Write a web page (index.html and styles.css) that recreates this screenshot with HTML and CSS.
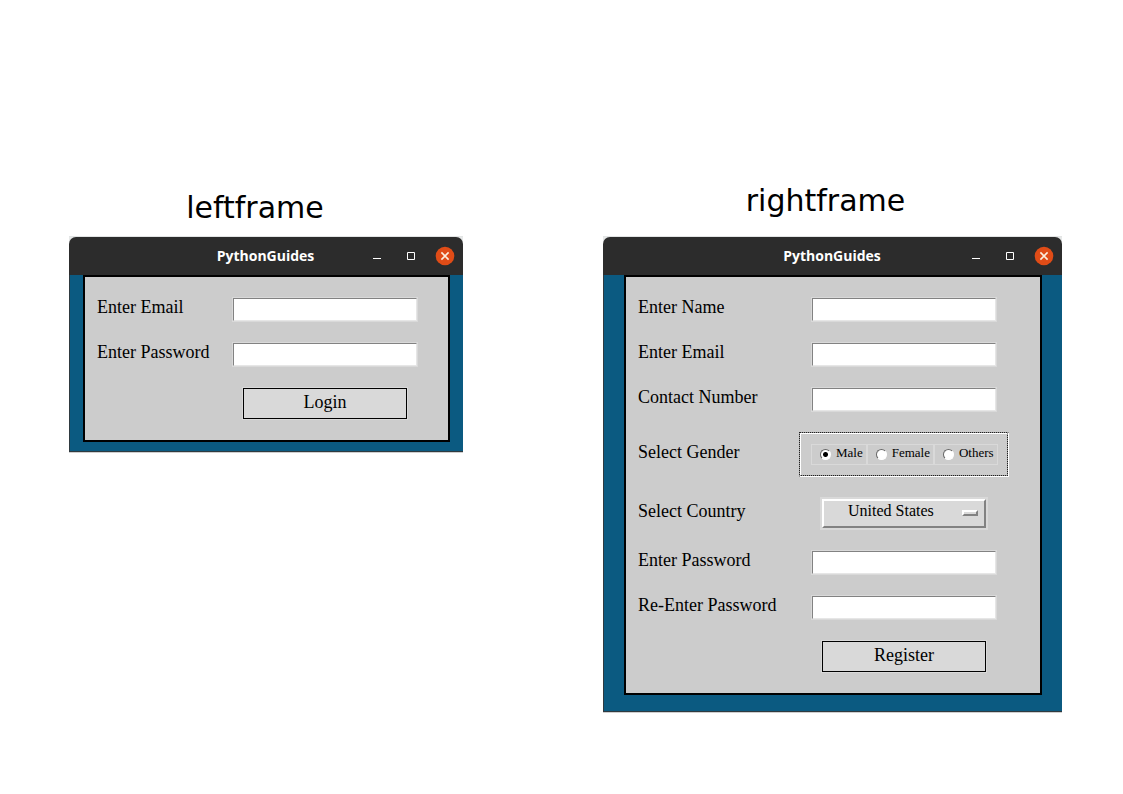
FILE: index.html
```html
<!DOCTYPE html>
<html lang="en">
<head>
<meta charset="utf-8">
<meta name="viewport" content="width=device-width, initial-scale=1">
<title>PythonGuides</title>
<link rel="stylesheet" href="styles.css">
</head>
<body>
<main class="board">
  <section class="panel panel-left">
    <h1 class="caption">leftframe</h1>
    <div class="window">
      <header class="titlebar">
        <h2 class="title">PythonGuides</h2>
        <div class="controls">
          <button class="control" type="button" aria-label="Minimize"><svg width="20" height="20" viewBox="0 0 20 20"><path d="M6 12.5h8" stroke="#fff" fill="none"/></svg></button>
          <button class="control" type="button" aria-label="Maximize"><svg width="20" height="20" viewBox="0 0 20 20"><path d="M6.5 6.5h7v7h-7z" stroke="#fff" fill="none"/></svg></button>
          <button class="control" type="button" aria-label="Close"><svg width="20" height="20" viewBox="0 0 20 20"><circle cx="10" cy="10" r="9.3" fill="#e04c17"/><path d="M6.4 6.4l7.2 7.2M13.6 6.4l-7.2 7.2" stroke="#fbeedd" stroke-width="1.6" fill="none"/></svg></button>
        </div>
      </header>
      <div class="body">
        <form class="form">
          <label class="label" for="login-email">Enter Email</label>
          <input class="entry" id="login-email" type="email">
          <label class="label" for="login-password">Enter Password</label>
          <input class="entry" id="login-password" type="password">
          <button class="submit" type="button">Login</button>
        </form>
      </div>
    </div>
  </section>

  <section class="panel panel-right">
    <h1 class="caption">rightframe</h1>
    <div class="window">
      <header class="titlebar">
        <h2 class="title">PythonGuides</h2>
        <div class="controls">
          <button class="control" type="button" aria-label="Minimize"><svg width="20" height="20" viewBox="0 0 20 20"><path d="M6 12.5h8" stroke="#fff" fill="none"/></svg></button>
          <button class="control" type="button" aria-label="Maximize"><svg width="20" height="20" viewBox="0 0 20 20"><path d="M6.5 6.5h7v7h-7z" stroke="#fff" fill="none"/></svg></button>
          <button class="control" type="button" aria-label="Close"><svg width="20" height="20" viewBox="0 0 20 20"><circle cx="10" cy="10" r="9.3" fill="#e04c17"/><path d="M6.4 6.4l7.2 7.2M13.6 6.4l-7.2 7.2" stroke="#fbeedd" stroke-width="1.6" fill="none"/></svg></button>
        </div>
      </header>
      <div class="body">
        <form class="form">
          <label class="label" for="name">Enter Name</label>
          <input class="entry" id="name" type="text">
          <label class="label" for="email">Enter Email</label>
          <input class="entry" id="email" type="email">
          <label class="label" for="contact">Contact Number</label>
          <input class="entry" id="contact" type="tel">
          <span class="label" id="gender-label">Select Gender</span>
          <div class="group" role="radiogroup" aria-labelledby="gender-label">
            <div class="group-inner">
              <label class="option"><input class="radio" type="radio" name="gender" checked><span class="option-text">Male</span></label>
              <label class="option"><input class="radio" type="radio" name="gender"><span class="option-text">Female</span></label>
              <label class="option"><input class="radio" type="radio" name="gender"><span class="option-text">Others</span></label>
            </div>
          </div>
          <label class="label" for="country">Select Country</label>
          <div class="menu">
            <select class="select" id="country"><option>United States</option></select>
            <span class="indicator"></span>
          </div>
          <label class="label" for="password">Enter Password</label>
          <input class="entry" id="password" type="password">
          <label class="label" for="password-again">Re-Enter Password</label>
          <input class="entry" id="password-again" type="password">
          <button class="submit" type="button">Register</button>
        </form>
      </div>
    </div>
  </section>
</main>
</body>
</html>
```

FILE: styles.css
```css
* {
  box-sizing: border-box;
}

body {
  margin: 0;
  background: #fff;
  color: #000;
  font-family: "Liberation Serif", "Times New Roman", serif;
}

.board {
  display: flex;
  flex-wrap: wrap;
  justify-content: space-between;
  align-items: flex-start;
  gap: 40px;
  padding: 183px 61px 40px 69px;
}

.panel-left {
  flex: 0 1 394px;
}

.panel-right {
  flex: 0 1 459px;
}

.caption {
  margin: 0 0 18px;
  padding-right: 14px;
  font: 400 30px/36px "DejaVu Sans", sans-serif;
  text-align: center;
}

.panel-left .caption {
  margin: 7px 0 11px;
  padding-right: 22px;
}

.window {
  background: #e6e8e8;
  box-shadow: 0 1px 0 #cfcfcf, 0 -1px 0 #e2e4e4;
}

.titlebar {
  display: grid;
  grid-template-columns: 1fr auto 1fr;
  align-items: center;
  height: 38px;
  padding-right: 1px;
  border-radius: 7px 7px 0 0;
  background: #2c2c2c;
}

.title {
  grid-column: 2;
  margin: 0;
  color: #fff;
  font: 700 14px/20px "Open Sans", "Noto Sans", sans-serif;
}

.controls {
  display: flex;
  justify-content: flex-end;
}

.control {
  display: flex;
  justify-content: center;
  width: 34px;
  padding: 0;
  border: 0;
  background: none;
}

.body {
  padding: 0 13px 9px;
  border-left: 1px solid #2f3a40;
  border-bottom: 1px solid #2f3a40;
  background: #0b5a81;
}

.panel-right .body {
  padding: 0 20px 16px;
}

.form {
  display: grid;
  grid-template-columns: 1fr 206px;
  align-items: center;
  row-gap: 20px;
  padding: 20px 20px 20px 12px;
  border: 2px solid #000;
  background: #ccc;
}

.panel-right .form {
  grid-template-columns: 1fr 210px;
  padding-right: 31px;
}

.label {
  padding-bottom: 5px;
  font-size: 18px;
  line-height: 20px;
}

.entry {
  justify-self: center;
  width: 184px;
  height: 23px;
  margin: 1px 0;
  padding: 0 3px;
  border: 1px solid;
  border-color: #828282 #e6e6e6 #e6e6e6 #828282;
  outline: 1px solid #d9d9d9;
  background: #fff;
  font: 16px/20px "Liberation Serif", serif;
}

.submit {
  grid-column: 2;
  justify-self: center;
  width: 164px;
  height: 31px;
  margin: 1px 0;
  padding: 0 0 3px;
  border: 1px solid #000;
  outline: 1px solid #d9d9d9;
  background: #d9d9d9;
  color: #000;
  font: 18px/24px "Liberation Serif", serif;
}

/* Etched frame: a stippled line with a white line beside it */
.group {
  border: 1px solid #fff;
  border-top: 1px dotted #222;
  border-left: 1px dotted #222;
  background: #999;
}

.group-inner {
  display: flex;
  padding: 10px;
  border: 1px dotted #222;
  border-top: 1px solid #fff;
  border-left: 1px solid #fff;
  background: linear-gradient(#ccc, #ccc) padding-box, #999 border-box;
}

.option {
  display: flex;
  align-items: center;
  gap: 5px;
  height: 21px;
  padding: 0 3px 0 8px;
  border: 1px solid #d9d9d9;
}

.option-text {
  padding-bottom: 3px;
  font-size: 13px;
  line-height: 16px;
}

.radio {
  appearance: none;
  flex: none;
  width: 11px;
  height: 11px;
  margin: 0;
  border: 1px solid;
  border-color: #666 #fff #fff #666;
  border-radius: 50%;
  background: #fff;
}

.radio:checked {
  background: radial-gradient(circle, #000 0 2px, #fff 3px);
}

.menu {
  position: relative;
  justify-self: center;
  width: 168px;
  border: 2px solid #d9d9d9;
}

.select {
  display: block;
  appearance: none;
  width: 100%;
  height: 29px;
  padding: 0 30px 5px 24px;
  border: 2px solid;
  border-color: #fff #828282 #828282 #fff;
  border-radius: 0;
  background: #d9d9d9;
  color: #000;
  font: 16px/20px "Liberation Serif", serif;
}

.indicator {
  position: absolute;
  top: 11px;
  right: 8px;
  width: 16px;
  height: 6px;
  border: 2px solid;
  border-color: #fff #828282 #828282 #fff;
  background: #d9d9d9;
  pointer-events: none;
}
```
